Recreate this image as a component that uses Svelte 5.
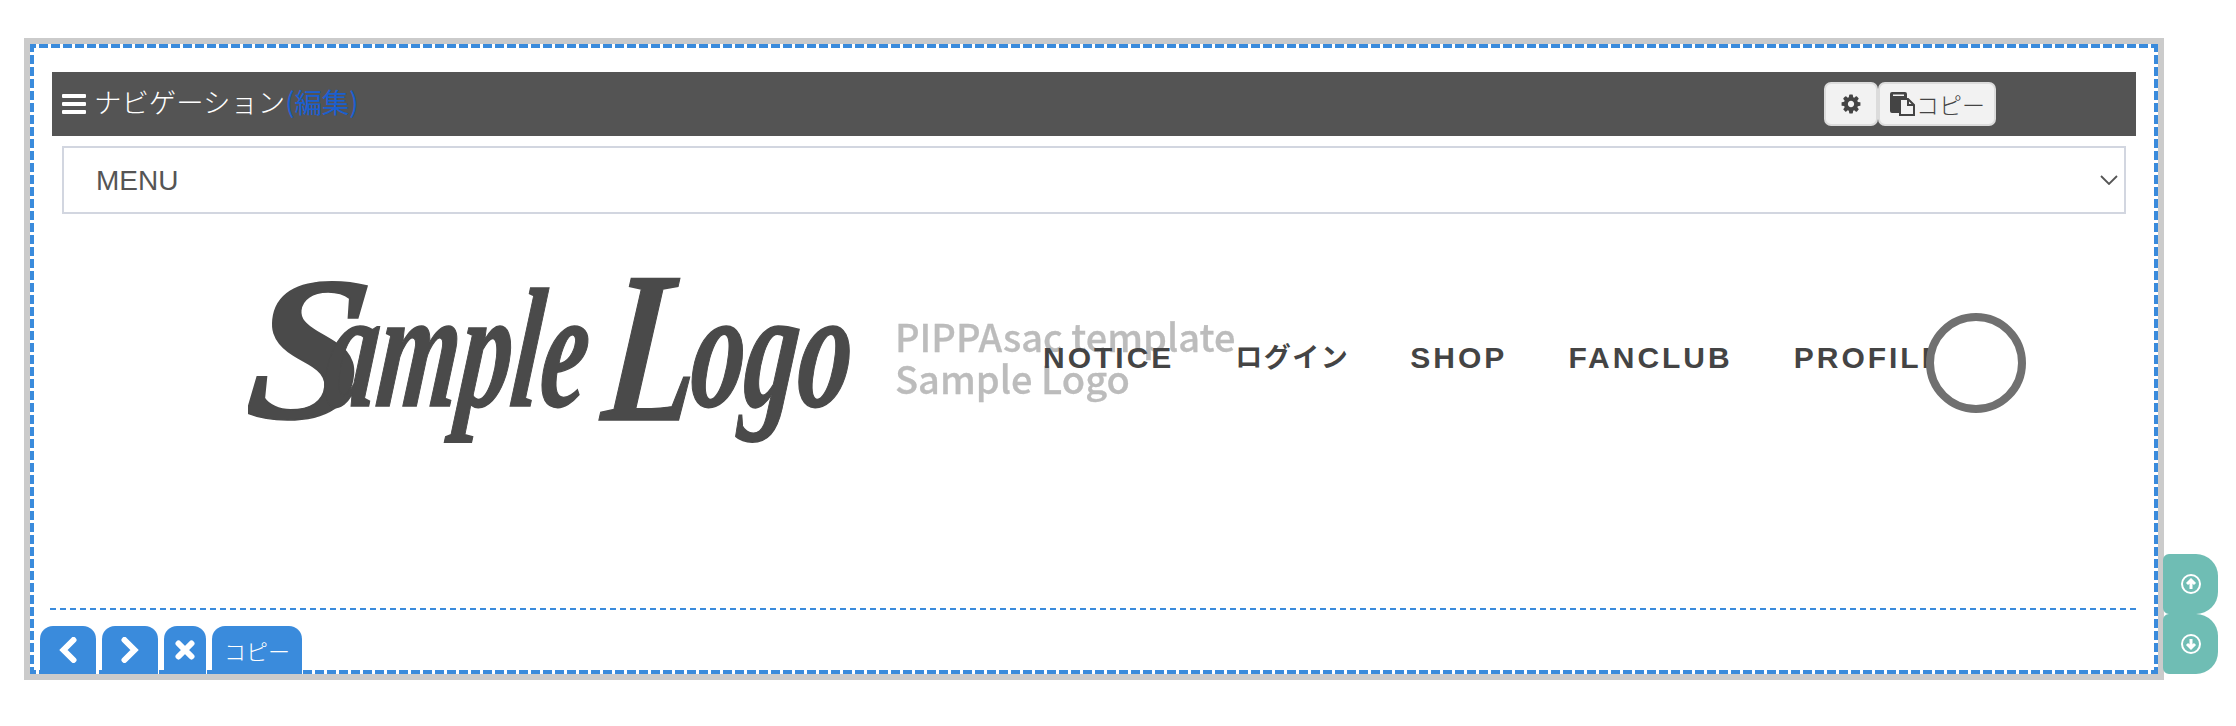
<script>
  const navItems = [
    { label: "NOTICE" },
    { label: "ログイン", ja: true },
    { label: "SHOP" },
    { label: "FANCLUB" },
    { label: "PROFILE" }
  ];
  const cog =
    "M1152 896q0-106-75-181t-181-75-181 75-75 181 75 181 181 75 181-75 75-181zm512-109v222q0 12-8 23t-20 13l-185 28q-19 54-39 91 35 50 107 138 10 12 10 25t-9 23q-27 37-99 108t-94 71q-12 0-26-9l-138-108q-44 23-91 38-16 136-29 186-7 28-36 28h-222q-14 0-24.5-8.5t-11.5-21.5l-28-184q-49-16-90-37l-141 107q-10 9-25 9-14 0-25-11-126-114-165-168-7-10-7-23 0-12 8-23 15-21 51-66.5t54-70.5q-27-50-41-99l-183-27q-13-2-21-12.5t-8-23.5v-222q0-12 8-23t19-13l186-28q14-46 39-92-40-57-107-138-10-12-10-24 0-10 9-23 26-36 98.5-107.5t94.5-71.5q13 0 26 10l138 107q44-23 91-38 16-136 29-186 7-28 36-28h222q14 0 24.5 8.5t11.5 21.5l28 184q49 16 90 37l142-107q9-9 24-9 13 0 25 10 129 119 165 170 7 8 7 22 0 12-8 23-15 21-51 66.5t-54 70.5q26 50 41 98l183 28q13 2 21 12.5t8 23.5z";
</script>

<div class="page">
  <div class="box">
    <div class="inner">
      <div class="bar">
        <svg class="bars" viewBox="0 0 24 20" width="24" height="20">
          <rect width="24" height="4" rx="1" />
          <rect y="8" width="24" height="4" rx="1" />
          <rect y="16" width="24" height="4" rx="1" />
        </svg>
        <span class="title">ナビゲーション</span><span class="edit">(編集)</span>
        <div class="tools">
          <button class="tool gear" aria-label="設定">
            <svg viewBox="0 0 1792 1792" width="22" height="22">
              <path fill="#444" fill-rule="evenodd" d={cog} />
            </svg>
          </button>
          <button class="tool copy">
            <svg viewBox="0 0 25 24" width="25" height="24">
              <path fill="#444" d="M2 0h13q2 0 2 2v5H10v14H2q-2 0-2-2V2q0-2 2-2z" />
              <rect x="3" y="2.5" width="11" height="1.5" fill="#f2f2f2" />
              <path fill="#f2f2f2" stroke="#444" stroke-width="2" d="M10 7h8l6 6v10H10z" />
              <path fill="#444" d="M17 7h2v5h5v2h-7z" />
            </svg>コピー
          </button>
        </div>
      </div>

      <div class="select">
        <select>
          <option>MENU</option>
        </select>
        <svg class="chevron" viewBox="0 0 18 10" width="18" height="10">
          <path d="M1 1l8 8 8-8" fill="none" stroke="#555" stroke-width="1.8" />
        </svg>
      </div>

      <div class="header">
        <svg class="logo" viewBox="0 0 992 180" width="992" height="180">
          <g class="script">
            <text x="-6" y="148" font-size="206" textLength="120" lengthAdjust="spacingAndGlyphs">S</text>
            <text x="72" y="136" font-size="170" textLength="262" lengthAdjust="spacingAndGlyphs">ample</text>
            <text x="352" y="150" font-size="216" textLength="92" lengthAdjust="spacingAndGlyphs">L</text>
            <text x="438" y="136" font-size="170" textLength="160" lengthAdjust="spacingAndGlyphs">ogo</text>
          </g>
          <g class="sub">
            <text x="647" y="82">PIPPAsac template</text>
            <text x="647" y="124">Sample Logo</text>
          </g>
        </svg>
        <nav>
          {#each navItems as item}
            <a href="#top" class:ja={item.ja}>{item.label}</a>
          {/each}
        </nav>
        <div class="ring"></div>
      </div>

      <div class="rule"></div>

      <div class="actions">
        <button class="act wide" aria-label="前へ">
          <svg viewBox="0 0 18 26" width="18" height="26">
            <path d="M14.5 3L4.5 13l10 10" />
          </svg>
        </button>
        <button class="act wide" aria-label="次へ">
          <svg viewBox="0 0 18 26" width="18" height="26">
            <path d="M3.5 3l10 10-10 10" />
          </svg>
        </button>
        <button class="act close" aria-label="閉じる">
          <svg viewBox="0 0 20 20" width="20" height="20">
            <path d="M3.5 3.5l13 13M16.5 3.5l-13 13" />
          </svg>
        </button>
        <button class="act text">コピー</button>
      </div>
    </div>
  </div>

  <div class="side">
    <button class="move" aria-label="上へ">
      <svg viewBox="0 0 20 20" width="20" height="20">
        <circle cx="10" cy="10" r="9" />
        <path d="M10 15V6M6 10l4-4 4 4" />
      </svg>
    </button>
    <button class="move" aria-label="下へ">
      <svg viewBox="0 0 20 20" width="20" height="20">
        <circle cx="10" cy="10" r="9" />
        <path d="M10 5v9M6 10l4 4 4-4" />
      </svg>
    </button>
  </div>
</div>

<style>
  :global(body) {
    margin: 0;
    background: #fff;
  }

  .page {
    display: flex;
    align-items: flex-end;
    padding: 38px 0 0 24px;
    width: 2212px;
    height: 680px;
    box-sizing: border-box;
    font-family: "Liberation Sans", "Noto Sans CJK JP", sans-serif;
  }

  .box {
    width: 2140px;
    height: 642px;
    box-sizing: border-box;
    border: 6px solid #cbcbcb;
    flex: none;
  }

  /* dashes are 9 on / 3 off, the browser's own dashed border is too sparse */
  .inner {
    height: 100%;
    box-sizing: border-box;
    padding: 28px 22px 0;
    background:
      repeating-linear-gradient(90deg, #3a8bdc 0 6px, #fff 6px 9px, #3a8bdc 9px 12px) top / 100% 4px no-repeat,
      repeating-linear-gradient(90deg, #3a8bdc 0 6px, #fff 6px 9px, #3a8bdc 9px 12px) bottom / 100% 4px no-repeat,
      repeating-linear-gradient(180deg, #3a8bdc 0 8px, #fff 8px 11px, #3a8bdc 11px 12px) left / 4px 100% no-repeat,
      repeating-linear-gradient(180deg, #3a8bdc 0 8px, #fff 8px 11px, #3a8bdc 11px 12px) right / 4px 100% no-repeat;
  }

  .bar {
    height: 64px;
    background: #545454;
    display: flex;
    align-items: center;
    padding-left: 10px;
    font-size: 27.4px;
    font-family: "Noto Sans CJK JP", sans-serif;
    font-weight: 300;
    color: #fff;
  }

  .bars {
    fill: #fff;
    margin-right: 8px;
  }

  .title,
  .edit {
    margin-bottom: 7px;
  }

  .edit {
    color: #1a5fd0;
    font-weight: 400;
  }

  .tools {
    display: flex;
    margin-left: auto;
    margin-right: 140px;
  }

  .tool {
    height: 44px;
    box-sizing: border-box;
    background: #f2f2f2;
    border: 2px solid #dcdcdc;
    border-radius: 7px;
    padding: 0;
    display: flex;
    align-items: center;
    justify-content: center;
    color: #444;
    font-family: "Noto Sans CJK JP", sans-serif;
    font-weight: 300;
    font-size: 23px;
  }

  .gear {
    width: 54px;
  }

  .copy {
    width: 118px;
    justify-content: flex-start;
    padding-left: 10px;
    gap: 1px;
  }

  .select {
    position: relative;
    margin: 10px 10px 0;
  }

  select {
    display: block;
    width: 100%;
    height: 68px;
    box-sizing: border-box;
    appearance: none;
    border: 2px solid #d2d6e0;
    border-radius: 0;
    background: #fff;
    padding-left: 32px;
    color: #555;
    font-family: "Liberation Sans", sans-serif;
    font-size: 28px;
  }

  .chevron {
    position: absolute;
    right: 8px;
    top: 29px;
  }

  .header {
    display: flex;
    align-items: flex-start;
    height: 394px;
    box-sizing: border-box;
    padding: 56px 0 0 196px;
    margin-right: -18px;
  }

  .logo {
    flex: none;
  }

  .script {
    transform: skewX(-6deg);
    transform-origin: 0 150px;
  }

  .script text {
    font-family: "Liberation Serif", serif;
    font-style: italic;
    font-weight: 700;
    fill: #4a4a4a;
    stroke: #4a4a4a;
    stroke-width: 1.5px;
  }

  .sub {
    filter: blur(0.6px);
  }

  .sub text {
    font-family: "Noto Sans CJK JP", sans-serif;
    font-weight: 500;
    font-size: 38px;
    fill: #bcbcbc;
    stroke: #bcbcbc;
    stroke-width: 0.3px;
  }

  nav {
    display: flex;
    gap: 61px;
    flex: none;
    margin: 73px 0 0 -197px;
  }

  nav a {
    font-size: 30px;
    line-height: 30px;
    font-weight: 700;
    letter-spacing: 3px;
    color: #444;
    text-decoration: none;
  }

  nav a.ja {
    font-size: 27px;
    letter-spacing: 1.5px;
  }

  .ring {
    flex: none;
    width: 100px;
    height: 100px;
    box-sizing: border-box;
    border: 8px solid #707070;
    border-radius: 50%;
    background: #fff;
    margin: 43px 0 0 -19px;
  }

  .rule {
    height: 2px;
    margin: 0 -2px;
    background: repeating-linear-gradient(90deg, #3a8bdc 0 6px, #fff 6px 10px);
  }

  .actions {
    display: flex;
    gap: 6px;
    margin: 16px 0 0 -12px;
  }

  .act {
    height: 48px;
    box-sizing: border-box;
    border: 0;
    padding: 0;
    background: #3a8bdc;
    color: #fff;
    border-radius: 13px 13px 0 0;
    display: flex;
    align-items: center;
    justify-content: center;
    font-family: "Noto Sans CJK JP", sans-serif;
    font-weight: 300;
    font-size: 22px;
  }

  .act svg {
    fill: none;
    stroke: #fff;
    stroke-width: 6px;
    stroke-linecap: round;
  }

  .wide {
    width: 56px;
  }

  .close {
    width: 42px;
  }

  .text {
    width: 90px;
  }

  .side {
    display: flex;
    flex-direction: column;
    margin: 0 0 6px -1px;
  }

  .move {
    width: 55px;
    height: 60px;
    border: 0;
    padding: 0;
    background: #6fbdb4;
    border-radius: 6px 22px 22px 6px;
    display: flex;
    align-items: center;
    justify-content: center;
  }

  .move svg {
    fill: none;
    stroke: #fff;
    stroke-width: 2px;
  }

  .move path {
    stroke-width: 3px;
  }
</style>
